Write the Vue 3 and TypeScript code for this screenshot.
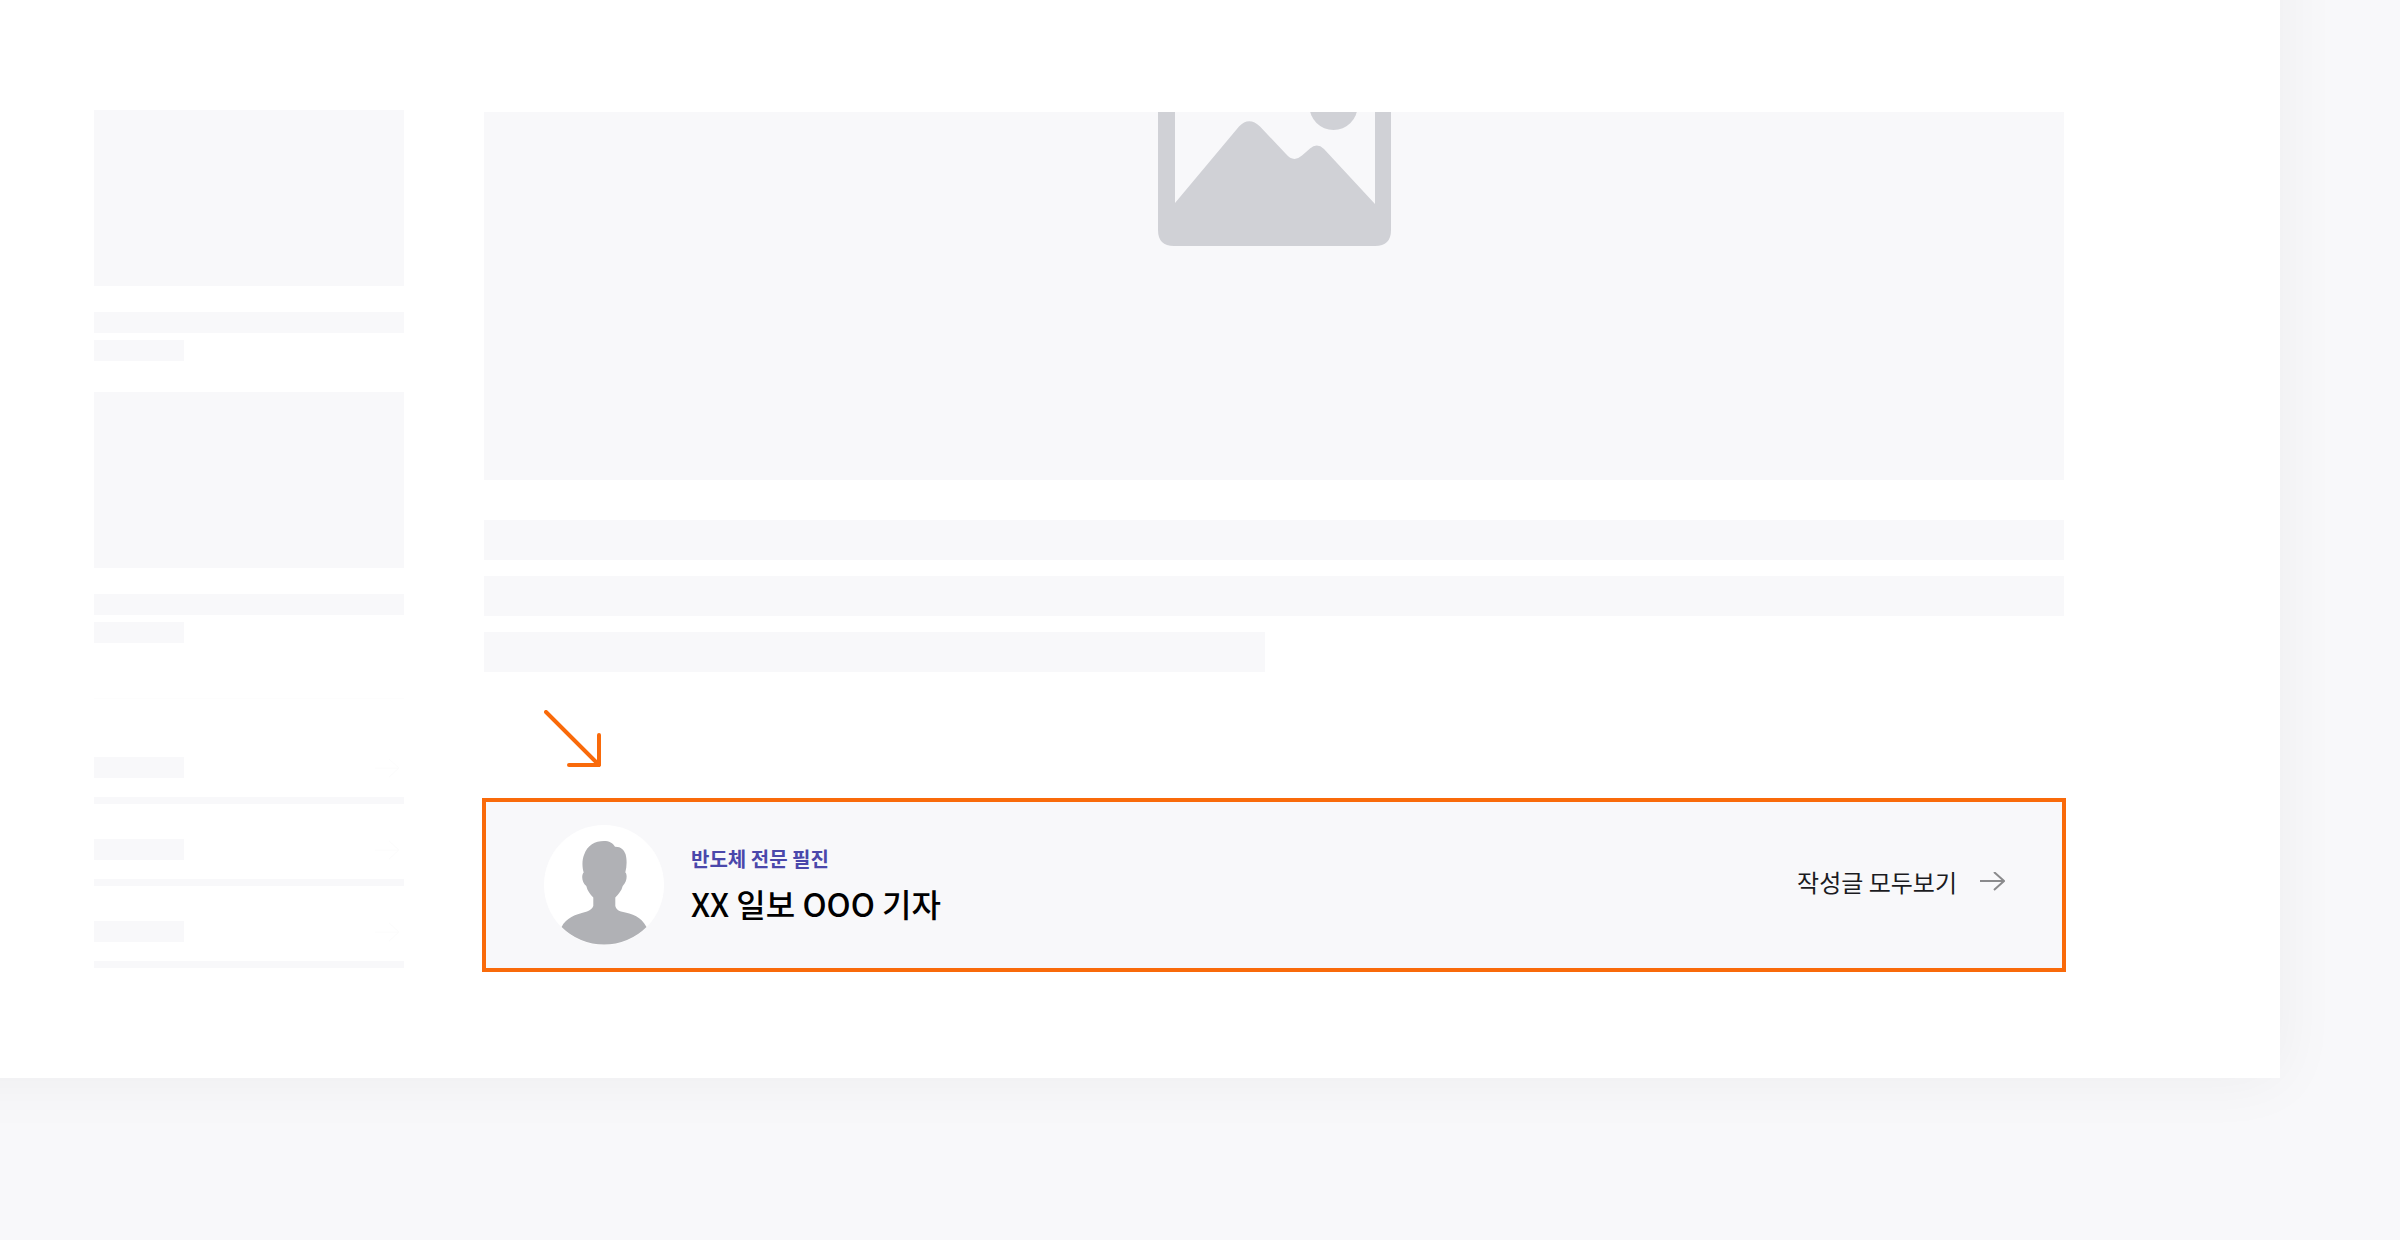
<script setup lang="ts">
const cards: number[] = [1, 2]
const rows: number[] = [1, 2, 3]
</script>

<template>
  <div class="page">
    <div class="sheet">
      <aside class="side">
        <div v-for="card in cards" :key="card" class="card">
          <div class="block thumb"></div>
          <div class="block line"></div>
          <div class="block line short"></div>
        </div>
        <div class="list">
          <div v-for="row in rows" :key="row" class="row">
            <div class="row-head">
              <div class="block line short"></div>
              <svg class="row-arrow" viewBox="0 0 26 20" aria-hidden="true">
                <path d="M1 10H25M15 1L25 10L15 19" />
              </svg>
            </div>
            <div class="block rule"></div>
          </div>
        </div>
      </aside>

      <main class="main">
        <div class="block hero">
          <svg class="picture" viewBox="0 0 233 134" aria-hidden="true">
            <path
              fill-rule="evenodd"
              d="M0 0H233V118Q233 134 217 134H16Q0 134 0 118ZM17 0V91L81 14.500Q91 4 102 14.500L128 42Q135.500 51 144 43.500L152 36.500Q159 30.500 166 37L217 92V0Z"
            />
            <circle cx="175.500" cy="-6" r="24" />
          </svg>
        </div>
        <div class="paragraph">
          <div class="block text"></div>
          <div class="block text"></div>
          <div class="block text half"></div>
        </div>
        <svg class="pointer" viewBox="0 0 58 58" aria-hidden="true">
          <path d="M2 2L55 55M55 25V55H25" />
        </svg>
        <section class="author">
          <svg class="avatar" viewBox="0 0 120 120" aria-hidden="true">
            <circle cx="60" cy="60" r="60" fill="#fff" />
            <path
              fill="#b0b1b5"
              d="M60 16C65 16 69 18 71 21.700C77 21.500 80 25 81.500 29C83 34 83 41 81.300 47.500C83.500 49 83.200 57 78.700 61C77.500 66 74.500 69 71.300 72.500V81C72 84 74 85.500 77 86.500C89 89 97 91.500 102.500 102A60 60 0 0 1 17.600 102C22 93 31 89.500 43 86.500C46 85.500 48.500 83.500 49.300 81V72.500C46 69 43.500 66 42.300 61C38 58 37 50 39.700 47.500C38 42 38 35 40 30C43.500 20 51 16 60 16Z"
            />
          </svg>
          <div class="who">
            <p class="role">반도체 전문 필진</p>
            <h2 class="name">XX 일보 OOO 기자</h2>
          </div>
          <a class="more" href="#">
            <span>작성글 모두보기</span>
            <svg class="more-arrow" viewBox="0 0 26 20" aria-hidden="true">
              <path d="M1 9H25M15 0L25 9L15 18" />
            </svg>
          </a>
        </section>
      </main>
    </div>
  </div>
</template>

<style>
body {
  margin: 0;
  background: #f8f8fa;
}
</style>

<style scoped>
.page {
  font-family: "Noto Sans CJK KR", "Noto Sans", sans-serif;
  padding: 0 120px 162px 0;
  overflow: hidden;
}

/* The sheet runs off the top and left edges, so its shadow shows only right and below. */
.sheet {
  display: flex;
  gap: 80px;
  margin: -80px 0 0 -80px;
  padding: 190px 216px 106px 174px;
  background: #fff;
  box-shadow: 0 0 60px rgba(0, 0, 0, 0.05);
}

.block {
  background: #f8f8fa;
}

.side {
  flex: 0 0 310px;
}

.card {
  margin-bottom: 31px;
}

.card:nth-child(2) {
  margin-bottom: 55px;
}

.thumb {
  height: 176px;
  margin-bottom: 26px;
}

.line {
  height: 21px;
  margin-bottom: 7px;
}

.short {
  width: 90px;
  margin-bottom: 0;
}

.list {
  padding-top: 58px;
  border-top: 1px solid #fdfdfd;
}

.row {
  margin-bottom: 35px;
}

.row:last-child {
  margin-bottom: 0;
}

.row-head {
  display: flex;
  align-items: center;
  justify-content: space-between;
  margin-bottom: 19px;
}

.row-arrow {
  width: 26px;
  height: 20px;
  margin-right: 4px;
  fill: none;
  stroke: #fcfcfc;
  stroke-width: 1;
}

.rule {
  height: 7px;
}

.main {
  flex: 1;
  min-width: 0;
  padding-top: 2px;
}

.hero {
  display: flex;
  justify-content: center;
  align-items: flex-start;
  height: 368px;
  margin-bottom: 40px;
}

.picture {
  width: 233px;
  height: 134px;
  fill: #d0d1d6;
}

.paragraph {
  display: flex;
  flex-direction: column;
  gap: 16px;
}

.text {
  height: 40px;
}

.half {
  width: 781px;
}

.pointer {
  display: block;
  width: 58px;
  height: 58px;
  margin: 38px 0 30px 60px;
  fill: none;
  stroke: #f96a0a;
  stroke-width: 4;
  stroke-linecap: round;
  stroke-linejoin: round;
}

.author {
  display: flex;
  align-items: center;
  box-sizing: border-box;
  min-height: 174px;
  margin: 0 -2px;
  padding: 0 57px 0 58px;
  border: 4px solid #f96a0a;
  background: #f8f8fa;
}

.avatar {
  width: 120px;
  height: 120px;
  margin-right: 27px;
}

.who {
  flex: 1;
  padding-top: 2px;
}

.role {
  margin: 0;
  color: #4a47ab;
  font-size: 20px;
  line-height: 32px;
  font-weight: 700;
}

.name {
  margin: 2px 0 0;
  color: #000;
  font-size: 32px;
  line-height: 52px;
  font-weight: 500;
}

.more {
  display: flex;
  align-items: center;
  gap: 22px;
  padding-bottom: 6px;
  color: #1b1b1f;
  font-size: 24px;
  line-height: 36px;
  text-decoration: none;
}

.more-arrow {
  width: 26px;
  height: 20px;
  fill: none;
  stroke: #8a8a8c;
  stroke-width: 2;
}
</style>
